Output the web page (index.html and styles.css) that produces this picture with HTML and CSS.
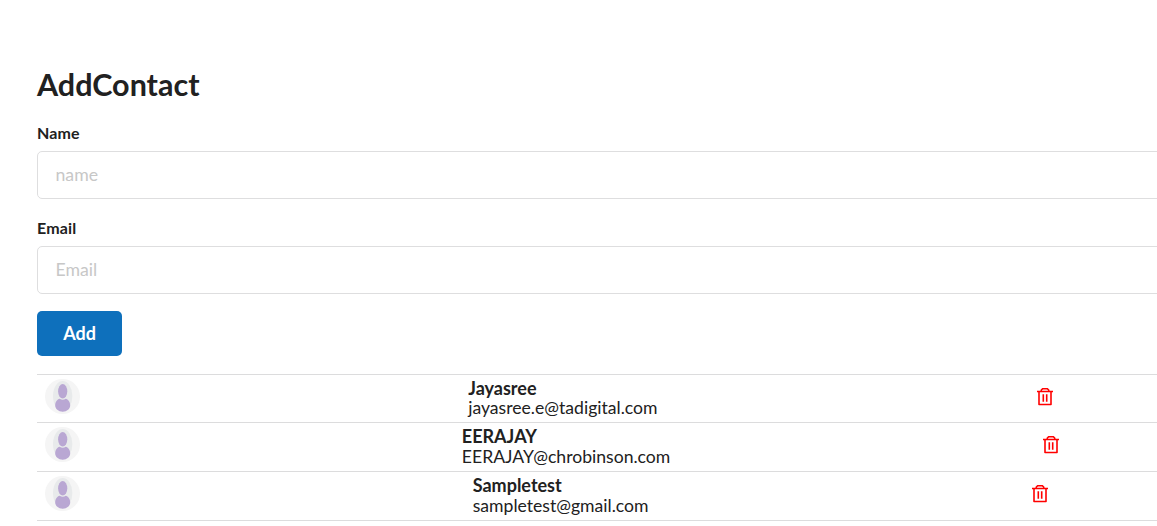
FILE: index.html
```html
<!DOCTYPE html>
<html lang="en">
<head>
<meta charset="utf-8">
<title>Contacts</title>
<link rel="stylesheet" href="styles.css">
</head>
<body>
<svg class="defs" width="0" height="0" aria-hidden="true">
  <symbol id="avatar" viewBox="0 0 35 35">
    <circle cx="17.5" cy="17.5" r="17.5" fill="#f5f5f5"/>
    <ellipse cx="17.7" cy="17" rx="9.7" ry="15" fill="#e8eaeb"/>
    <path d="M10.2 26.5c0-3.4 2-6.2 4.5-6.7 1.6 1.2 4.4 1.2 6 0 2.5.5 4.5 3.3 4.5 6.7 0 3.3-3.2 6.2-7.5 6.2s-7.5-2.9-7.5-6.2z" fill="#b9a7d3"/>
    <ellipse cx="17.7" cy="12.3" rx="4.6" ry="7.2" fill="#b9a7d3"/>
  </symbol>
  <symbol id="trash" viewBox="0 0 18 20">
    <path d="M1 4.500h16M3 4.500v13h12V4.500M5.300 4.200V3L6.800 1.700h4.400L12.700 3v1.200M7.300 7.200v7.500M10.700 7.200v7.500" fill="none" stroke="#f00" stroke-width="1.600" stroke-linejoin="round"/>
  </symbol>
</svg>
<main class="page">
  <h2 class="title">AddContact</h2>
  <form class="form">
    <div class="field">
      <label class="label" for="name">Name</label>
      <input class="input" id="name" type="text" placeholder="name">
    </div>
    <div class="field">
      <label class="label" for="email">Email</label>
      <input class="input" id="email" type="text" placeholder="Email">
    </div>
    <button class="button" type="button">Add</button>
  </form>
  <div class="list">
    <div class="item">
      <svg class="avatar"><use href="#avatar"/></svg>
      <div class="content"><div class="name">Jayasree</div><div>jayasree.e@tadigital.com</div></div>
      <svg class="trash"><use href="#trash"/></svg>
      <span></span>
    </div>
    <div class="item">
      <svg class="avatar"><use href="#avatar"/></svg>
      <div class="content"><div class="name">EERAJAY</div><div>EERAJAY@chrobinson.com</div></div>
      <svg class="trash"><use href="#trash"/></svg>
      <span></span>
    </div>
    <div class="item">
      <svg class="avatar"><use href="#avatar"/></svg>
      <div class="content"><div class="name">Sampletest</div><div>sampletest@gmail.com</div></div>
      <svg class="trash"><use href="#trash"/></svg>
      <span></span>
    </div>
  </div>
</main>
</body>
</html>
```
FILE: styles.css
```css
* { box-sizing: border-box; }
body {
  margin: 0;
  overflow: hidden;
  background: #fff;
  color: #212121;
  font: 17.6px/20px Lato, sans-serif;
}
.defs { display: block; height: 0; }
.page { width: 1444px; padding: 65px 0 0 37px; }
.title { margin: 0 0 18px; font-size: 30.5px; line-height: 38px; font-weight: 700; }
.field { margin-bottom: 17px; }
.label { display: block; height: 30px; font-size: 16px; line-height: 24px; font-weight: 700; letter-spacing: 0.15px; }
.input {
  display: block;
  width: 100%;
  height: 48px;
  padding: 0 17.5px 2px;
  border: 1px solid #dededf;
  border-radius: 5px;
  background: #fff;
  font: 17.7px/22px Lato, sans-serif;
}
.input::placeholder { color: #c7c7c7; opacity: 1; }
.button {
  display: block;
  width: 85px;
  height: 45px;
  padding: 0 0 2px;
  border: 0;
  border-radius: 5px;
  background: #0e70bc;
  color: #fff;
  font: 700 18px/20px Lato, sans-serif;
}
.list { margin-top: 17.6px; border-top: 1px solid #dcdcdd; }
.item {
  display: flex;
  justify-content: space-between;
  height: 48.75px;
  padding: 4px 8px 0;
  border-bottom: 1px solid #dcdcdd;
}
.avatar { width: 35px; height: 35px; }
.content { padding-left: 8px; line-height: 20.5px; margin-top: -1px; }
.name { height: 20.9px; font-size: 18px; font-weight: 700; }
.trash { width: 18px; height: 20px; margin: 8px 2px 0 -2px; }
```
